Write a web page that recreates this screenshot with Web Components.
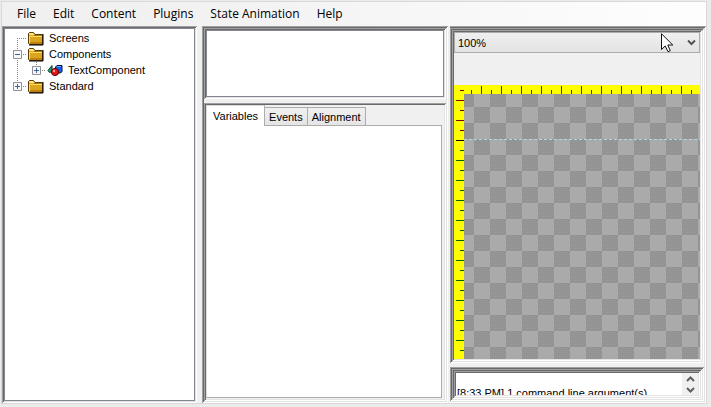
<!DOCTYPE html>
<html lang="en">
<head>
<meta charset="utf-8">
<title>Screen editor</title>
<style>
html, body { height: 100%; margin: 0; }
body { --ui: "Liberation Sans", Arial, sans-serif; background: #ebebeb; color: #000; font: 11px/16px var(--ui); overflow: hidden; }
</style>
</head>
<body>
<editor-window></editor-window>
<script>
const define = (name, html, setup) => customElements.define(name, class extends HTMLElement {
  connectedCallback() {
    if (this.shadowRoot) return;
    const root = this.attachShadow({ mode: "open" });
    root.innerHTML = html;
    if (setup) setup(this, root);
  }
});

define("menu-bar", `
<style>
:host { display: block; background: linear-gradient(90deg, #f0f0f0, #f2f2f2 30%, #fdfdfd 95%); }
nav { display: flex; gap: 17px; height: 24px; padding-left: 15px; align-items: center; }
button { all: unset; font: 12px/16px "Open Sans", "Noto Sans", sans-serif; white-space: nowrap; }
</style>
<nav aria-label="Main menu"><button>File</button><button>Edit</button><button>Content</button><button>Plugins</button><button>State Animation</button><button>Help</button></nav>`);

/* Sunken frame; depth="1" to "3" picks how many rings are drawn. */
define("bevel-frame", `
<style>
:host { display: flex; min-width: 0; min-height: 0; box-sizing: border-box; }
:host([depth="1"]) { padding: 2px; box-shadow: inset 1px 1px #a0a0a0, inset -1px -1px #fff, inset 2px 2px #696969, inset -2px -2px #e3e3e3; }
:host([depth="2"]) { padding: 4px; box-shadow: inset 1px 1px #a0a0a0, inset -1px -1px #fff, inset 2px 2px #696969, inset -2px -2px #e3e3e3, inset 3px 3px #a0a0a0, inset -3px -3px #fff, inset 4px 4px #696969, inset -4px -4px #e3e3e3; }
:host([depth="3"]) { padding: 6px; box-shadow: inset 1px 1px #a0a0a0, inset -1px -1px #fff, inset 2px 2px #696969, inset -2px -2px #e3e3e3, inset 3px 3px #a0a0a0, inset -3px -3px #fff, inset 4px 4px #696969, inset -4px -4px #e3e3e3, inset 5px 5px #a0a0a0, inset -5px -5px #fff, inset 6px 6px #696969, inset -6px -6px #e3e3e3; }
::slotted(*) { flex: 1; min-width: 0; }
</style><slot></slot>`);

define("blank-list", `<style>:host { display: block; background: #fff; border: 1px solid #828790; }</style>`);

const FOLDER = `<svg width="17" height="16" viewBox="0 0 17 16" aria-hidden="true"><path d="M1.500 13.500V3.500L2.500 2.500H6.500L8 4.500H15.500V14.500H2.500z" fill="#dca520" stroke="#5a3a08"/><path d="M2 5V4L3 3H6L7.500 5z" fill="#ffe878"/><path d="M2 6h13v1H2zM2 6h1v7H2z" fill="#ffe060"/><path d="M7 5h8v1H7z" fill="#a87818"/><path d="M3 12h12v2H3z" fill="#bd800c"/><path d="M16 4v11H2" fill="none" stroke="#000"/></svg>`;
const SHAPES = `<svg width="17" height="16" viewBox="0 0 17 16" aria-hidden="true"><path d="M2 8.500L6 3.500v6L3.500 10.500z" fill="#20a070" stroke="#043828"/><path d="M9.500 5L11 3.500h5V9.500L14.500 11H9.500z" fill="#1060e8" stroke="#041048"/><path d="M11 4.500h4" stroke="#60a8ff"/><circle cx="9" cy="10" r="3.600" fill="#e01818" stroke="#600"/><circle cx="8" cy="9" r="1.200" fill="#ff9898"/></svg>`;
const cell = body => `<svg width="19" height="16" viewBox="0 0 19 16" aria-hidden="true" fill="none" stroke="#808080" stroke-dasharray="1 1">${body}</svg>`;
const BOX = `<path d="M5.500 4.500h8v8h-8z" fill="#f8f8f8" stroke="#919191" stroke-dasharray="none"/>`;
const MINUS = `<path d="M7 8.500h5" stroke="#4060a8" stroke-dasharray="none"/>`;
const PLUS = MINUS + `<path d="M9.500 6v5" stroke="#4060a8" stroke-dasharray="none"/>`;
const CELLS = {
  first: cell(`<path d="M9.500 8v8M9 8.500h10"/>`),
  open: cell(`<path d="M9.500 0v16M9 8.500h10"/>` + BOX + MINUS),
  line: cell(`<path d="M9.500 0v16"/>`),
  closed: cell(`<path d="M9.500 0v8M9 8.500h10"/>` + BOX + PLUS)
};

define("tree-node", `
<style>
:host { display: flex; height: 16px; align-items: center; }
svg { display: block; flex: none; }
.label { margin-left: 5px; font: 11px/16px var(--ui); white-space: nowrap; }
</style><span class="label"><slot></slot></span>`, (el, root) => {
  const icon = el.getAttribute("icon") === "shapes" ? SHAPES : FOLDER;
  const cells = el.getAttribute("cells").split(" ").map(k => CELLS[k]).join("");
  root.querySelector(".label").insertAdjacentHTML("beforebegin", cells + icon);
});

define("project-tree", `
<style>:host { display: block; background: #fff; border: 1px solid #828790; padding: 1px 3px; }</style>
<div role="tree" aria-label="Project">
<tree-node role="treeitem" cells="first">Screens</tree-node>
<tree-node role="treeitem" cells="open">Components</tree-node>
<tree-node role="treeitem" cells="line closed" icon="shapes">TextComponent</tree-node>
<tree-node role="treeitem" cells="closed">Standard</tree-node>
</div>`);

define("property-tabs", `
<style>
:host { display: flex; flex-direction: column; background: #f0f0f0; padding: 0 2px 1px 0; }
.strip { display: flex; align-items: flex-end; height: 20px; }
button { appearance: none; margin: 0; box-sizing: border-box; border: 1px solid #acacac; border-bottom: 0; border-left: 0; padding: 0 4px; height: 18px; font: 11px/18px var(--ui); color: #000; background: linear-gradient(#f0f0f0, #e5e5e5); white-space: nowrap; }
button[aria-selected=true] { height: 21px; margin-bottom: -1px; padding: 0 6px; background: #fff; border-left: 1px solid #dcdcdc; border-top-color: #dcdcdc; position: relative; }
.page { flex: 1; background: #fff; border: 1px solid #acacac; border-left-color: #dcdcdc; }
</style>
<div class="strip" role="tablist"><button role="tab" aria-selected="true">Variables</button><button role="tab" aria-selected="false">Events</button><button role="tab" aria-selected="false">Alignment</button></div>
<div class="page" role="tabpanel" aria-label="Variables"></div>`);

define("ruled-canvas", `
<style>
:host { display: grid; grid-template: 9px 1fr / 10px 1fr; background: #ff0; }
.left { grid-row: 1 / 3; background: linear-gradient(#800000 50px, #000 50px 60px, #006400 60px);
  mask: linear-gradient(#000 1px, transparent 1px) 6px 5px / 4px 20px repeat-y, linear-gradient(#000 1px, transparent 1px) 2px 15px / 8px 20px repeat-y; }
.top { background: linear-gradient(90deg, #006400 1px, transparent 1px) 7px 5px / 20px 4px repeat-x, linear-gradient(90deg, #006400 1px, transparent 1px) 17px 1px / 20px 8px repeat-x; }
svg { display: block; width: 100%; height: 100%; min-height: 0; }
.area { min-height: 0; overflow: hidden; }
</style>
<div class="left"></div><div class="top"></div>
<div class="area"><svg role="img" aria-label="Canvas">
<defs>
<pattern id="dots" width="4" height="4" patternUnits="userSpaceOnUse"><path d="M0 0h4v4H0z" fill="#939393"/><path d="M1 1h1v1H1zM3 3h1v1H3z" fill="#9d9d9d"/></pattern>
<pattern id="check" x="10" y="13" width="32" height="32" patternUnits="userSpaceOnUse"><path d="M0 0h32v32H0z" fill="#aaa"/><path d="M0 0h16v16H0zM16 16h16v16H16z" fill="url(#dots)"/></pattern>
</defs>
<rect width="100%" height="100%" fill="url(#check)"/>
<line x1="0" x2="100%" y1="45.500" y2="45.500" stroke="#add8e6" stroke-dasharray="3 2"/>
</svg></div>`);

define("zoom-select", `
<style>
:host { display: grid; position: relative; }
select { grid-area: 1 / 1; appearance: none; box-sizing: border-box; width: 100%; height: 21px; margin: 0; padding: 0 3px; border: 1px solid #acacac; border-radius: 0; background: linear-gradient(#f0f0f0, #e3e3e3); font: 11px/18px var(--ui); color: #000; }
.chevron { grid-area: 1 / 1; justify-self: end; align-self: center; margin-right: 4px; pointer-events: none; }
.pointer { position: absolute; right: 26px; top: 1px; pointer-events: none; }
</style>
<select aria-label="Zoom"><option>100%</option></select>
<svg class="chevron" width="9" height="7" viewBox="0 0 9 7" aria-hidden="true"><path d="M1 1.500L4.500 5 8 1.500" fill="none" stroke="#555" stroke-width="2"/></svg>
<svg class="pointer" width="13" height="20" viewBox="0 0 13 20" aria-hidden="true"><path d="M.5.8V16.500L4.200 13 7 18.700 9.300 17.700 6.800 12H11.800z" fill="#fff" stroke="#101018"/></svg>`);

define("log-console", `
<style>
:host { display: flex; background: #fff; min-height: 0; }
textarea { flex: 1; min-width: 0; height: 22px; box-sizing: border-box; margin: 0; border: 0; outline: 0; padding: 12px 0 0 1px; resize: none; overflow: hidden; background: #fff; font: 11px/16px var(--ui); color: #000; white-space: pre; }
.scroll { display: flex; flex-direction: column; width: 16px; background: #f0f0f0; }
button { all: unset; flex: 1; display: grid; place-items: center; }
</style>
<textarea readonly aria-label="Log">[8:33 PM] 1 command line argument(s)</textarea>
<div class="scroll">
<button aria-label="Scroll up"><svg width="9" height="6" viewBox="0 0 9 6"><path d="M1 5L4.500 1.500 8 5" fill="none" stroke="#606060" stroke-width="2"/></svg></button>
<button aria-label="Scroll down"><svg width="9" height="6" viewBox="0 0 9 6"><path d="M1 1L4.500 4.500 8 1" fill="none" stroke="#606060" stroke-width="2"/></svg></button>
</div>`);

define("editor-window", `
<style>
:host { display: flex; flex-direction: column; box-sizing: border-box; height: 100vh; padding: 1px 4px 3px 1px; }
.window { flex: 1; min-height: 0; display: flex; flex-direction: column; border: 1px solid #d9d9d9; background: #f0f0f0; }
.work { flex: 1; min-height: 0; display: grid; grid-template-columns: 200px 248px 1fr; }
.tree { margin-right: 5px; }
.middle { margin-right: 2px; }
.col { display: flex; flex-direction: column; gap: 4px; min-height: 0; min-width: 0; }
.grow { flex: 1; }
.list { height: 71px; }
.view { display: flex; flex-direction: column; background: #f0f0f0; }
ruled-canvas { flex: 1; min-height: 0; margin-top: 32px; }
.right { padding: 2px 2px 2px 0; box-shadow: inset 0 1px #a0a0a0, inset -1px -1px #fff, inset 0 2px #696969, inset -2px -2px #e3e3e3; }
</style>
<div class="window">
<menu-bar></menu-bar>
<main class="work">
<bevel-frame class="tree" depth="1"><project-tree></project-tree></bevel-frame>
<bevel-frame class="middle" depth="1"><div class="col">
<bevel-frame class="list" depth="1"><blank-list></blank-list></bevel-frame>
<bevel-frame class="grow" depth="1"><property-tabs></property-tabs></bevel-frame>
</div></bevel-frame>
<div class="col right">
<bevel-frame class="grow" depth="2"><div class="view"><zoom-select></zoom-select><ruled-canvas></ruled-canvas></div></bevel-frame>
<bevel-frame depth="3"><log-console></log-console></bevel-frame>
</div>
</main>
</div>`);
</script>
</body>
</html>
